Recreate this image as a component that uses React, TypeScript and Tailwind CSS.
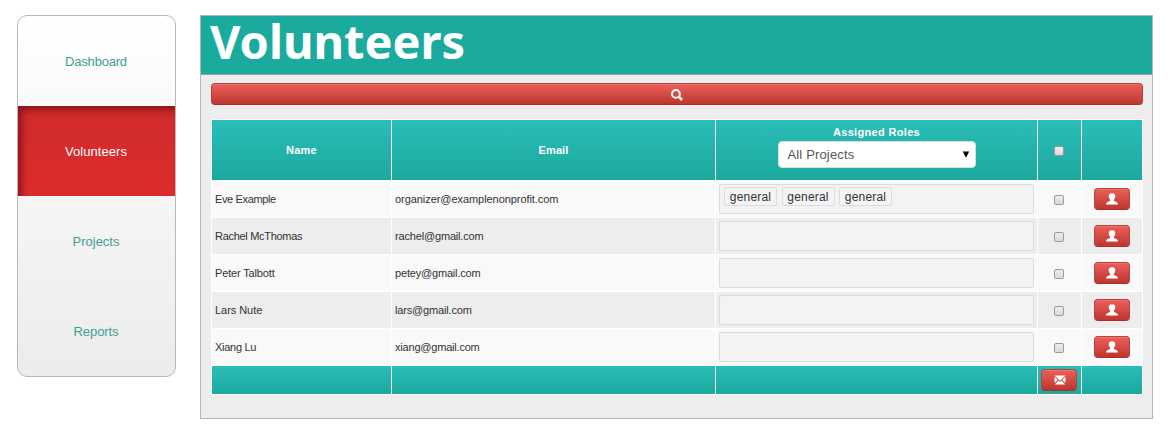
import React from "react";

const font = "font-['Liberation_Sans',Arial,sans-serif]";
const redButton =
  "flex items-center justify-center rounded-[4px] border border-[#b9423e] border-b-[#a5322c] bg-linear-to-b from-[#ec5f5b] to-[#bd362f] text-white shadow-[inset_0_1px_0_rgba(255,255,255,0.12)]";
const tealCell = "bg-linear-to-b from-[#2abdb9] to-[#1ba99d]";
const columns = "grid grid-cols-[179px_323px_321px_43px_60px] gap-x-px";

const menu = [
  { label: "Dashboard", tracking: "tracking-[-0.2px]" },
  { label: "Volunteers", tracking: "tracking-[0.05px]", active: true },
  { label: "Projects", tracking: "tracking-[0px]" },
  { label: "Reports", tracking: "tracking-[-0.1px]" },
];

const people = [
  {
    name: "Eve Example",
    email: "organizer@examplenonprofit.com",
    roles: ["general", "general", "general"],
    nameTracking: "tracking-[-0.36px]",
    emailTracking: "tracking-[-0.06px]",
  },
  {
    name: "Rachel McThomas",
    email: "rachel@gmail.com",
    roles: [],
    nameTracking: "tracking-[-0.3px]",
    emailTracking: "tracking-[-0.17px]",
  },
  {
    name: "Peter Talbott",
    email: "petey@gmail.com",
    roles: [],
    nameTracking: "tracking-[-0.15px]",
    emailTracking: "tracking-[-0.18px]",
  },
  {
    name: "Lars Nute",
    email: "lars@gmail.com",
    roles: [],
    nameTracking: "tracking-[-0.05px]",
    emailTracking: "tracking-[-0.16px]",
  },
  {
    name: "Xiang Lu",
    email: "xiang@gmail.com",
    roles: [],
    nameTracking: "tracking-[-0.28px]",
    emailTracking: "tracking-[-0.2px]",
  },
];

function SearchIcon() {
  return (
    <svg width="12" height="12" viewBox="0 0 12 12" fill="none" stroke="#fff" className="relative top-px">
      <circle cx="4.9" cy="4.9" r="3.900" strokeWidth="2" />
      <path d="M7.7 7.7L11 11" strokeWidth="2.5" />
    </svg>
  );
}

function UserIcon() {
  return (
    <svg width="12" height="12" viewBox="0 0 12 12" fill="#fff">
      <path d="M6 .3C8.200.3 9.300 1.500 9.300 3.300c0 1.600-.6 2.700-1.500 3.500v1c.5.700 3.100 1 3.700 2.100.3.500.4 1 .4 1.700H.1c0-.7.1-1.200.4-1.700.6-1.100 3.200-1.400 3.700-2.100v-1C3.300 6 2.700 4.900 2.700 3.300 2.700 1.500 3.800.3 6 .3z" />
    </svg>
  );
}

function MailIcon() {
  return (
    <svg width="12" height="10" viewBox="0 0 12 10" fill="#fff" className="relative left-px">
      <path d="M.5.5h11L6 5.700zM.5 1.800L3.700 4.800.5 8zM11.500 1.800v6.200L8.300 4.800zM4.400 5.500L6 7l1.600-1.500 3.700 3.900H.7z" />
    </svg>
  );
}

function Check() {
  return (
    <input
      type="checkbox"
      className="block size-[10px] appearance-none rounded-[2px] border border-[#9b9b9b] bg-linear-to-b from-[#ededed] to-[#d9d9d9]"
    />
  );
}

function Sidebar() {
  return (
    <nav className="mt-[15px] ml-[17px] h-[362px] w-[159px] shrink-0 overflow-hidden rounded-[10px] border border-[#b8b8b8] bg-linear-to-b from-white to-[#ececec]">
      {menu.map((m) => (
        <a
          key={m.label}
          className={`flex h-[90px] items-center justify-center text-[13px] ${m.tracking} ${
            m.active
              ? "bg-linear-to-b from-[#cf2b2c] to-[#dd2c2c] text-white shadow-[inset_5px_5px_7px_-1px_rgba(90,0,10,0.55)]"
              : "text-[#3fa193]"
          }`}
        >
          <span className="relative top-px right-[0.5px]">{m.label}</span>
        </a>
      ))}
    </nav>
  );
}

export default function App() {
  return (
    <div className={`flex h-[437px] w-[1174px] overflow-hidden bg-white ${font}`}>
      <Sidebar />
      <main className="mt-[15px] ml-[24px] h-[404px] w-[953px] shrink-0 border border-[#b5b5b5] bg-[#ededed]">
        <header className="h-[59px] border-b border-[#8aa9a5] bg-[#1aab9e] pl-[9px]">
          <h1 className="font-['Noto_Sans',sans-serif] text-[47px] leading-[50px] font-bold text-white">
            <span>Volunteers</span>
          </h1>
        </header>
        <button className={`mt-[8px] ml-[10px] h-[22px] w-[932px] ${redButton}`}>
          <SearchIcon />
        </button>
        <div className="mt-[14px] ml-[10px] w-[932px] bg-white p-px text-[11px] text-[#333]">
          <div className={`${columns} h-[60px] font-bold text-white`}>
            <div className={`flex items-center justify-center ${tealCell}`}>
              <span className="tracking-[0.25px]">Name</span>
            </div>
            <div className={`flex items-center justify-center ${tealCell}`}>
              <span className="tracking-[0.1px]">Email</span>
            </div>
            <div className={`flex flex-col items-center ${tealCell}`}>
              <span className="mt-[4px] leading-[17px] tracking-[0.33px]">Assigned Roles</span>
              <div className="flex h-[27px] w-[198px] items-center justify-between rounded-[4px] border border-[#d5dede] bg-white pr-[5px] pl-[9px] text-[13px] font-normal text-[#555]">
                <span className="tracking-[0.15px]">All Projects</span>
                <svg width="8" height="7" viewBox="0 0 8 7" fill="#000">
                  <path d="M.8.5h6.400L4 6.800z" />
                </svg>
              </div>
            </div>
            <div className={`flex items-center justify-center pt-px pr-px ${tealCell}`}>
              <Check />
            </div>
            <div className={tealCell} />
          </div>
          <div className="mt-px flex flex-col gap-px">
            {people.map((p, i) => {
              const bg = i % 2 ? "bg-[#ededed]" : "bg-[#f9f9f9]";
              return (
                <div key={p.name} className={`${columns} h-[36px]`}>
                  <div className={`flex items-center pl-[3px] ${bg}`}>
                    <span className={p.nameTracking}>{p.name}</span>
                  </div>
                  <div className={`flex items-center pl-[3px] ${bg}`}>
                    <span className={p.emailTracking}>{p.email}</span>
                  </div>
                  <div className={`px-[3px] pt-[3px] ${bg}`}>
                    <div className="flex h-[30px] gap-[4.500px] rounded-[2px] border border-[#dcdcdc] bg-[#f3f3f3] pt-[2px] pl-[4px] text-[12px]">
                      {p.roles.map((r, k) => (
                        <span
                          key={k}
                          className="flex h-[19px] w-[53px] items-center justify-center rounded-[2px] border border-[#dcdcdc] bg-[#f4f4f4]"
                        >
                          <span className="tracking-[0.2px]">{r}</span>
                        </span>
                      ))}
                    </div>
                  </div>
                  <div className={`flex items-center justify-center pt-[2px] pr-px ${bg}`}>
                    <Check />
                  </div>
                  <div className={`flex items-center justify-center ${bg}`}>
                    <button className={`h-[22px] w-[36px] ${redButton}`}>
                      <UserIcon />
                    </button>
                  </div>
                </div>
              );
            })}
          </div>
          <div className={`${columns} mt-px h-[28px]`}>
            <div className={tealCell} />
            <div className={tealCell} />
            <div className={tealCell} />
            <div className={`flex items-center justify-center pr-px ${tealCell}`}>
              <button className={`h-[22px] w-[36px] ${redButton}`}>
                <MailIcon />
              </button>
            </div>
            <div className={tealCell} />
          </div>
        </div>
      </main>
    </div>
  );
}
